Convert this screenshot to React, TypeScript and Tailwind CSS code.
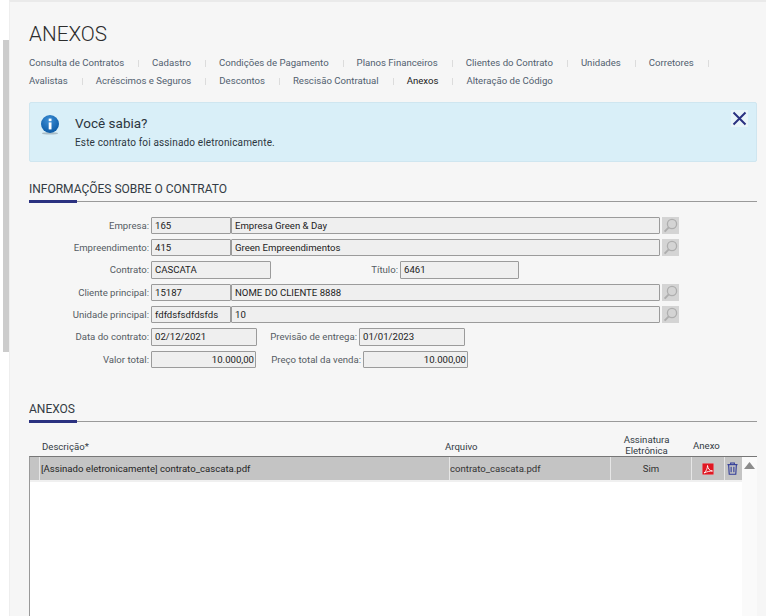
import React from "react";

const tabs1 = ["Consulta de Contratos", "Cadastro", "Condições de Pagamento", "Planos Financeiros", "Clientes do Contrato", "Unidades", "Corretores"];
const tabs2 = ["Avalistas", "Acréscimos e Seguros", "Descontos", "Rescisão Contratual", "Anexos", "Alteração de Código"];

function Tab({ label, last }: { label: string; last?: boolean }) {
  const active = label === "Anexos";
  return (
    <span className="flex items-center h-full">
      <span className={active ? "text-[#1a1a1a]" : "text-[#51606f]"}>{label}</span>
      {!last && <span className="w-px h-[7px] bg-[#dcdcdc] ml-[14px] mr-[13px]" />}
    </span>
  );
}

function SectionTitle({ title }: { title: string }) {
  return (
    <div>
      <div className="text-[12px] leading-[14px] text-[#333b44]">{title}</div>
      <div className="relative mt-[4px] h-[3px] flex items-center">
        <div className="w-12 h-[3px] bg-[#2b3180]" />
        <div className="flex-1 h-px bg-[#9a9a9a]" />
      </div>
    </div>
  );
}

function Input({ value, className, right }: { value?: string; className: string; right?: boolean }) {
  return (
    <div className={`h-full shrink-0 bg-[#efefef] border border-[#9b9b9b] rounded-[1px] pt-[1px] flex items-center text-[9.6px] text-[#1c1c1c] whitespace-nowrap overflow-hidden ${right ? "justify-end pr-[1px]" : "px-[3px]"} ${className}`}>
      {value}
    </div>
  );
}

function Label({ text, className }: { text: string; className: string }) {
  return <div className={`shrink-0 text-right text-[9.6px] pt-[1px] text-[#555c63] whitespace-nowrap ${className}`}>{text}</div>;
}

function SearchBtn() {
  return (
    <div className="ml-[2px] w-[17px] h-full bg-[#d4d4d4] flex items-center justify-center shrink-0">
      <svg width="15" height="15" viewBox="0 0 15 15" fill="none">
        <circle cx="9" cy="6" r="4.6" stroke="#aeaeae" strokeWidth="1.3" />
        <path d="M5.8 9.4 L1.6 13.6" stroke="#aeaeae" strokeWidth="2" />
      </svg>
    </div>
  );
}

function LookupRow({ label, code, name, h }: { label: string; code: string; name: string; h: string }) {
  return (
    <div className={`flex items-center ${h}`}>
      <Label text={label} className="w-[120px] mr-[2px]" />
      <Input value={code} className="w-[80px]" />
      <Input value={name} className="w-[429px]" />
      <SearchBtn />
    </div>
  );
}

export default function App() {
  return (
    <div className="flex h-[616px] w-[766px] overflow-hidden bg-white" style={{ fontFamily: "Roboto, sans-serif" }}>
      <div className="w-[9px] shrink-0 pt-[40px] pl-[3px]">
        <div className="h-[312px] bg-[#cccccc]" />
      </div>
      <div className="flex-1 min-w-0 flex flex-col bg-[#f6f6f6] border-l border-[#eeeeee] border-t-2 border-t-[#eaeaea] pl-[19px] pr-[9px]">
        <h1 className="mt-[20px] text-[20.7px] leading-[24px] font-light text-[#2c2c2c]">ANEXOS</h1>
        <nav className="mt-[8px] text-[9.6px]">
          <div className="flex h-[19px]">{tabs1.map((t) => <Tab key={t} label={t} />)}</div>
          <div className="flex h-[17px]">{tabs2.map((t, i) => <Tab key={t} label={t} last={i === tabs2.length - 1} />)}</div>
        </nav>
        <div className="mt-[12px] h-[60px] shrink-0 bg-[#d9eff8] border border-[#cfe6f0] rounded-[2px] flex relative">
          <div className="ml-[11px] mt-[12px] w-[19px] h-[20px]">
            <svg width="19" height="20" viewBox="0 0 19 20">
              <defs>
                <radialGradient id="ig" cx="45%" cy="30%" r="70%">
                  <stop offset="0%" stopColor="#3d8fd6" />
                  <stop offset="100%" stopColor="#0b5aa5" />
                </radialGradient>
              </defs>
              <ellipse cx="9" cy="18.4" rx="8" ry="1.1" fill="#a9bcc5" />
              <circle cx="9" cy="9" r="9" fill="url(#ig)" />
              <rect x="7.7" y="7.4" width="2.8" height="7" fill="#ffffff" />
              <rect x="7.7" y="3.6" width="2.8" height="2.6" fill="#ffffff" />
            </svg>
          </div>
          <div className="ml-[15px]">
            <div className="mt-[11px] text-[13.5px] leading-[18px] text-[#2c3640]">Você sabia?</div>
            <div className="mt-[4px] text-[10px] leading-[14px] tracking-[0.15px] text-[#2c3640]">Este contrato foi assinado eletronicamente.</div>
          </div>
          <div className="absolute top-[7px] right-[8px] w-[17px] h-[17px] bg-[#e9f4f9] flex items-center justify-center">
            <svg width="15" height="15" viewBox="0 0 15 15">
              <path d="M1.5 1.5 L13.5 13.5 M13.5 1.5 L1.5 13.5" stroke="#2b3180" strokeWidth="2" />
            </svg>
          </div>
        </div>
        <div className="mt-[20px]"><SectionTitle title="INFORMAÇÕES SOBRE O CONTRATO" /></div>
        <div className="mt-[14px] flex flex-col gap-[5px]">
          <LookupRow label="Empresa:" code="165" name="Empresa Green & Day" h="h-[17px]" />
          <LookupRow label="Empreendimento:" code="415" name="Green Empreendimentos" h="h-[17px]" />
          <div className="flex items-center h-[18px]">
            <Label text="Contrato:" className="w-[120px] mr-[2px]" />
            <Input value="CASCATA" className="w-[120px]" />
            <Label text="Título:" className="w-[127px] mr-[2px]" />
            <Input value="6461" className="w-[119px]" />
          </div>
          <LookupRow label="Cliente principal:" code="15187" name="NOME DO CLIENTE 8888" h="h-[17px]" />
          <LookupRow label="Unidade principal:" code="fdfdsfsdfdsfds" name="10" h="h-[17px]" />
          <div className="flex items-center h-[18px]">
            <Label text="Data do contrato:" className="w-[120px] mr-[2px]" />
            <Input value="02/12/2021" className="w-[106px]" />
            <Label text="Previsão de entrega:" className="w-[100px] mr-[2px]" />
            <Input value="01/01/2023" className="w-[106px]" />
          </div>
          <div className="flex items-center h-[17px]">
            <Label text="Valor total:" className="w-[120px] mr-[2px]" />
            <Input value="10.000,00" right className="w-[105px]" />
            <Label text="Preço total da venda:" className="w-[105px] mr-[2px]" />
            <Input value="10.000,00" right className="w-[105px]" />
          </div>
        </div>
        <div className="mt-[34px]"><SectionTitle title="ANEXOS" /></div>
        <div className="mt-[8px] h-[25px] shrink-0 flex items-center text-[9.6px] text-[#333b44]">
          <div className="w-[416px] pl-[13px] pt-[8px]">Descrição*</div>
          <div className="w-[165px] pt-[8px]">Arquivo</div>
          <div className="w-[73px] text-center leading-[11px] pt-[3px]">Assinatura<br />Eletrônica</div>
          <div className="ml-[10px] pt-[6px]">Anexo</div>
        </div>
        <div className="flex-1 bg-white border-l border-[#999999] border-t border-t-[#777777] flex items-start">
          <div className="flex-1 border-b-2 border-[#f0f0f0] h-[25px] flex bg-[#c4c4c4] text-[9.6px] text-[#1f1f1f]">
            <div className="w-[10px] border-r border-[#e6e6e6]" />
            <div className="w-[410px] border-r border-[#e6e6e6] pl-[1px] pt-[1px] flex items-center">[Assinado eletronicamente] contrato_cascata.pdf</div>
            <div className="w-[161px] border-r border-[#e6e6e6] pt-[1px] flex items-center text-[#333333]">contrato_cascata.pdf</div>
            <div className="w-[81px] border-r border-[#e6e6e6] pt-[1px] flex items-center justify-center text-[#333333]">Sim</div>
            <div className="w-[33px] border-r border-[#e6e6e6] flex items-center justify-center">
              <svg width="12" height="12" viewBox="0 0 12 12">
                <rect width="12" height="12" fill="#e01722" stroke="#dcb8bb" strokeWidth="1" />
                <path d="M2 10 C4.5 8 5.5 5 5.5 2.5 C5.8 5.5 7.5 7.8 10.5 8 C8 8 5 8.6 2 10Z" fill="none" stroke="#ffffff" strokeWidth="0.9" />
              </svg>
            </div>
            <div className="flex-1 flex items-center justify-center pr-[3px]">
              <svg width="11" height="13" viewBox="0 0 12 14" fill="none" stroke="#2f3a98" strokeWidth="1.2">
                <path d="M0.5 2.8 H11.5" />
                <path d="M4 2.6 V1 H8 V2.6" />
                <path d="M1.8 3 L2.4 13.2 H9.6 L10.2 3" />
                <path d="M4.5 5 V11 M7.5 5 V11" />
              </svg>
            </div>
          </div>
          <div className="w-[15px] h-full bg-[#fafafa] flex justify-center pt-[5px]">
            <svg width="11" height="7" viewBox="0 0 11 7"><path d="M5.5 0 L11 7 H0Z" fill="#8c8c8c" /></svg>
          </div>
        </div>
      </div>
    </div>
  );
}
